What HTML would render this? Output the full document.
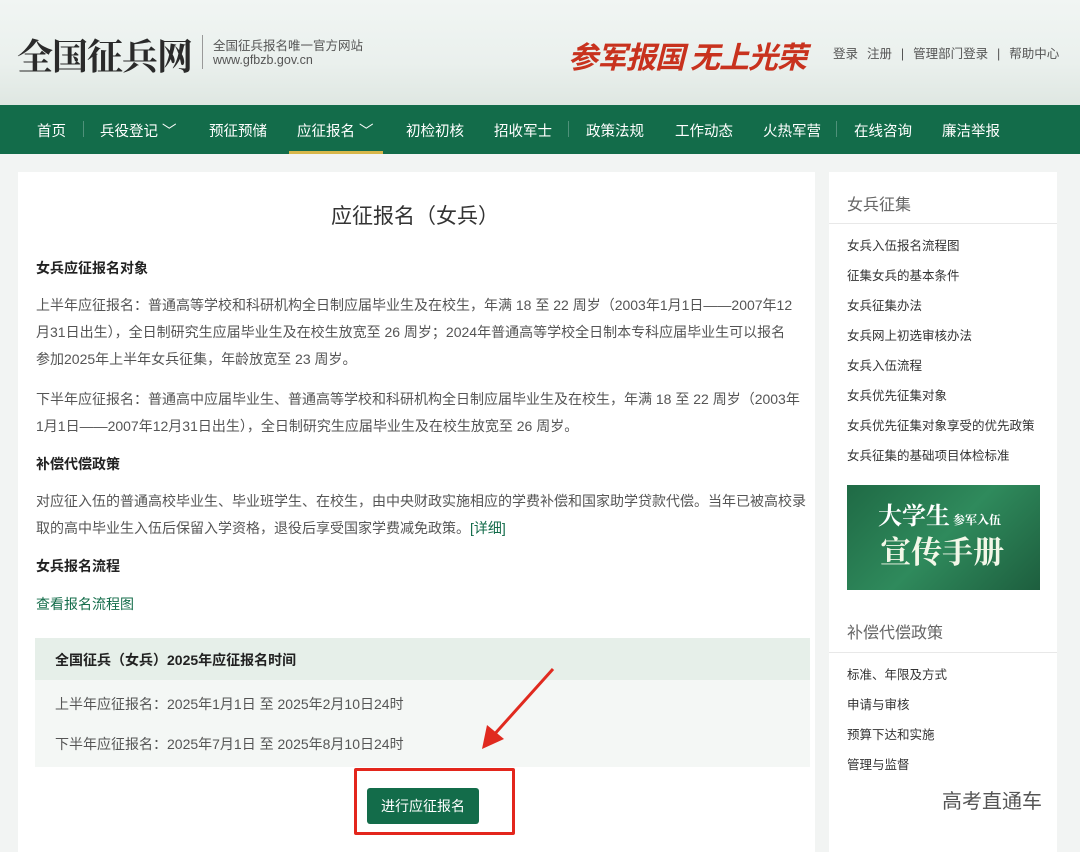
<!DOCTYPE html>
<html><head><meta charset="utf-8"><style>
*{margin:0;padding:0;box-sizing:border-box}
body{width:1080px;height:837px;overflow:hidden;background:#f2f4f3;font-family:"Liberation Sans","Noto Sans CJK SC",sans-serif;position:relative;color:#333}
.a{position:absolute;white-space:nowrap}
#hd{position:absolute;left:0;top:0;width:1080px;height:105px;background:linear-gradient(180deg,#f1f5f3 0%,#eaf0ed 60%,#dfe7e2 100%)}
#nav{position:absolute;left:0;top:105px;width:1080px;height:49px;background:#136c4a}
.n{position:absolute;top:120px;color:#fff;font-size:14.5px}
.sep{position:absolute;top:121px;width:1px;height:16px;background:#4f917a}
#main{position:absolute;left:18px;top:172px;width:797px;height:680px;background:#fff}
#side{position:absolute;left:829px;top:172px;width:228px;height:680px;background:#fff}
.p{font-size:14px;color:#555}
.b{font-size:14px;color:#222;font-weight:bold}
.s{font-size:12.5px;color:#333;left:847px}
</style></head><body>
<div id="hd"></div>
<div class="a" style="left:17px;top:29px;font-size:36px;font-weight:bold;color:#2a2a2a;font-family:'Noto Serif CJK SC',serif;letter-spacing:-1px">全国征兵网</div>
<div class="a" style="left:202px;top:35px;width:1px;height:34px;background:#999"></div>
<div class="a" style="left:213px;top:35px;font-size:12.5px;color:#555">全国征兵报名唯一官方网站</div>
<div class="a" style="left:213px;top:53px;font-size:12.5px;color:#555">www.gfbzb.gov.cn</div>
<div class="a" style="left:568px;top:33px;font-size:30px;color:#c8321e;font-weight:bold;font-style:italic;letter-spacing:-1px">参军报国</div>
<div class="a" style="left:690px;top:33px;font-size:30px;color:#c8321e;font-weight:bold;font-style:italic;letter-spacing:-1px">无上光荣</div>
<div class="a" style="left:833px;top:43px;font-size:12.5px;color:#555;word-spacing:1px">登录&nbsp; 注册 &nbsp;|&nbsp; 管理部门登录 &nbsp;|&nbsp; 帮助中心</div>
<div id="nav"></div>
<div class="n" style="left:37px">首页</div><div class="sep" style="left:83px"></div>
<div class="n" style="left:100px">兵役登记 ﹀</div>
<div class="n" style="left:209px">预征预储</div>
<div class="n" style="left:297px">应征报名 ﹀</div>
<div class="a" style="left:289px;top:151px;width:94px;height:3px;background:#d8b74a"></div>
<div class="n" style="left:406px">初检初核</div>
<div class="n" style="left:494px">招收军士</div><div class="sep" style="left:568px"></div>
<div class="n" style="left:586px">政策法规</div>
<div class="n" style="left:675px">工作动态</div>
<div class="n" style="left:763px">火热军营</div><div class="sep" style="left:836px"></div>
<div class="n" style="left:854px">在线咨询</div>
<div class="n" style="left:942px">廉洁举报</div>
<div id="main"></div>
<div id="side"></div>
<div class="a" style="left:331px;top:200px;font-size:21px;color:#333">应征报名（女兵）</div>
<div class="a b" style="left:36px;top:258px">女兵应征报名对象</div>
<div class="a p" style="left:36px;top:295px">上半年应征报名：普通高等学校和科研机构全日制应届毕业生及在校生，年满 18 至 22 周岁（2003年1月1日——2007年12</div>
<div class="a p" style="left:36px;top:322px">月31日出生），全日制研究生应届毕业生及在校生放宽至 26 周岁；2024年普通高等学校全日制本专科应届毕业生可以报名</div>
<div class="a p" style="left:36px;top:349px">参加2025年上半年女兵征集，年龄放宽至 23 周岁。</div>
<div class="a p" style="left:36px;top:389px">下半年应征报名：普通高中应届毕业生、普通高等学校和科研机构全日制应届毕业生及在校生，年满 18 至 22 周岁（2003年</div>
<div class="a p" style="left:36px;top:416px">1月1日——2007年12月31日出生），全日制研究生应届毕业生及在校生放宽至 26 周岁。</div>
<div class="a b" style="left:36px;top:454px">补偿代偿政策</div>
<div class="a p" style="left:36px;top:491px">对应征入伍的普通高校毕业生、毕业班学生、在校生，由中央财政实施相应的学费补偿和国家助学贷款代偿。当年已被高校录</div>
<div class="a p" style="left:36px;top:518px">取的高中毕业生入伍后保留入学资格，退役后享受国家学费减免政策。<span style="color:#136c4a">[详细]</span></div>
<div class="a b" style="left:36px;top:556px">女兵报名流程</div>
<div class="a p" style="left:36px;top:594px;color:#136c4a">查看报名流程图</div>
<div class="a" style="left:35px;top:638px;width:775px;height:42px;background:#e6efe9"></div>
<div class="a" style="left:35px;top:680px;width:775px;height:87px;background:#f4f7f5"></div>
<div class="a b" style="left:55px;top:650px;font-size:14px">全国征兵（女兵）2025年应征报名时间</div>
<div class="a p" style="left:55px;top:694px;font-size:14px">上半年应征报名：2025年1月1日 至 2025年2月10日24时</div>
<div class="a p" style="left:55px;top:734px;font-size:14px">下半年应征报名：2025年7月1日 至 2025年8月10日24时</div>
<svg class="a" style="left:470px;top:665px" width="90" height="90"><line x1="83" y1="4" x2="22" y2="72" stroke="#e02a1f" stroke-width="3"/><polygon points="12,84 17,60 34,74" fill="#e02a1f"/></svg>
<div class="a" style="left:354px;top:768px;width:161px;height:67px;border:3px solid #e3261c;border-radius:2px"></div>
<div class="a" style="left:367px;top:788px;width:112px;height:36px;background:#136c4a;border-radius:3px;color:#fff;font-size:14px;text-align:center;line-height:36px">进行应征报名</div>
<div class="a" style="left:847px;top:191px;font-size:16px;color:#666">女兵征集</div>
<div class="a" style="left:829px;top:223px;width:228px;height:1px;background:#e8e8e8"></div>
<div class="a s" style="top:235px">女兵入伍报名流程图</div>
<div class="a s" style="top:265px">征集女兵的基本条件</div>
<div class="a s" style="top:295px">女兵征集办法</div>
<div class="a s" style="top:325px">女兵网上初选审核办法</div>
<div class="a s" style="top:355px">女兵入伍流程</div>
<div class="a s" style="top:385px">女兵优先征集对象</div>
<div class="a s" style="top:415px">女兵优先征集对象享受的优先政策</div>
<div class="a s" style="top:445px">女兵征集的基础项目体检标准</div>
<div class="a" style="left:847px;top:485px;width:193px;height:105px;background:linear-gradient(135deg,#1f6a45,#2f8a5c 50%,#1d5e3e)"></div>
<div class="a" style="left:878px;top:496px;font-size:24px;font-weight:bold;color:#fff;font-family:'Noto Serif CJK SC',serif">大学生<span style="font-size:12px"> 参军入伍</span></div>
<div class="a" style="left:880px;top:527px;font-size:31px;font-weight:bold;color:#f3f7e8;font-family:'Noto Serif CJK SC',serif">宣传手册</div>
<div class="a" style="left:847px;top:619px;font-size:16px;color:#666">补偿代偿政策</div>
<div class="a" style="left:829px;top:652px;width:228px;height:1px;background:#e8e8e8"></div>
<div class="a s" style="top:664px">标准、年限及方式</div>
<div class="a s" style="top:694px">申请与审核</div>
<div class="a s" style="top:724px">预算下达和实施</div>
<div class="a s" style="top:754px">管理与监督</div>
<div class="a" style="left:942px;top:785px;font-size:20px;color:#555">高考直通车</div>
</body></html>
